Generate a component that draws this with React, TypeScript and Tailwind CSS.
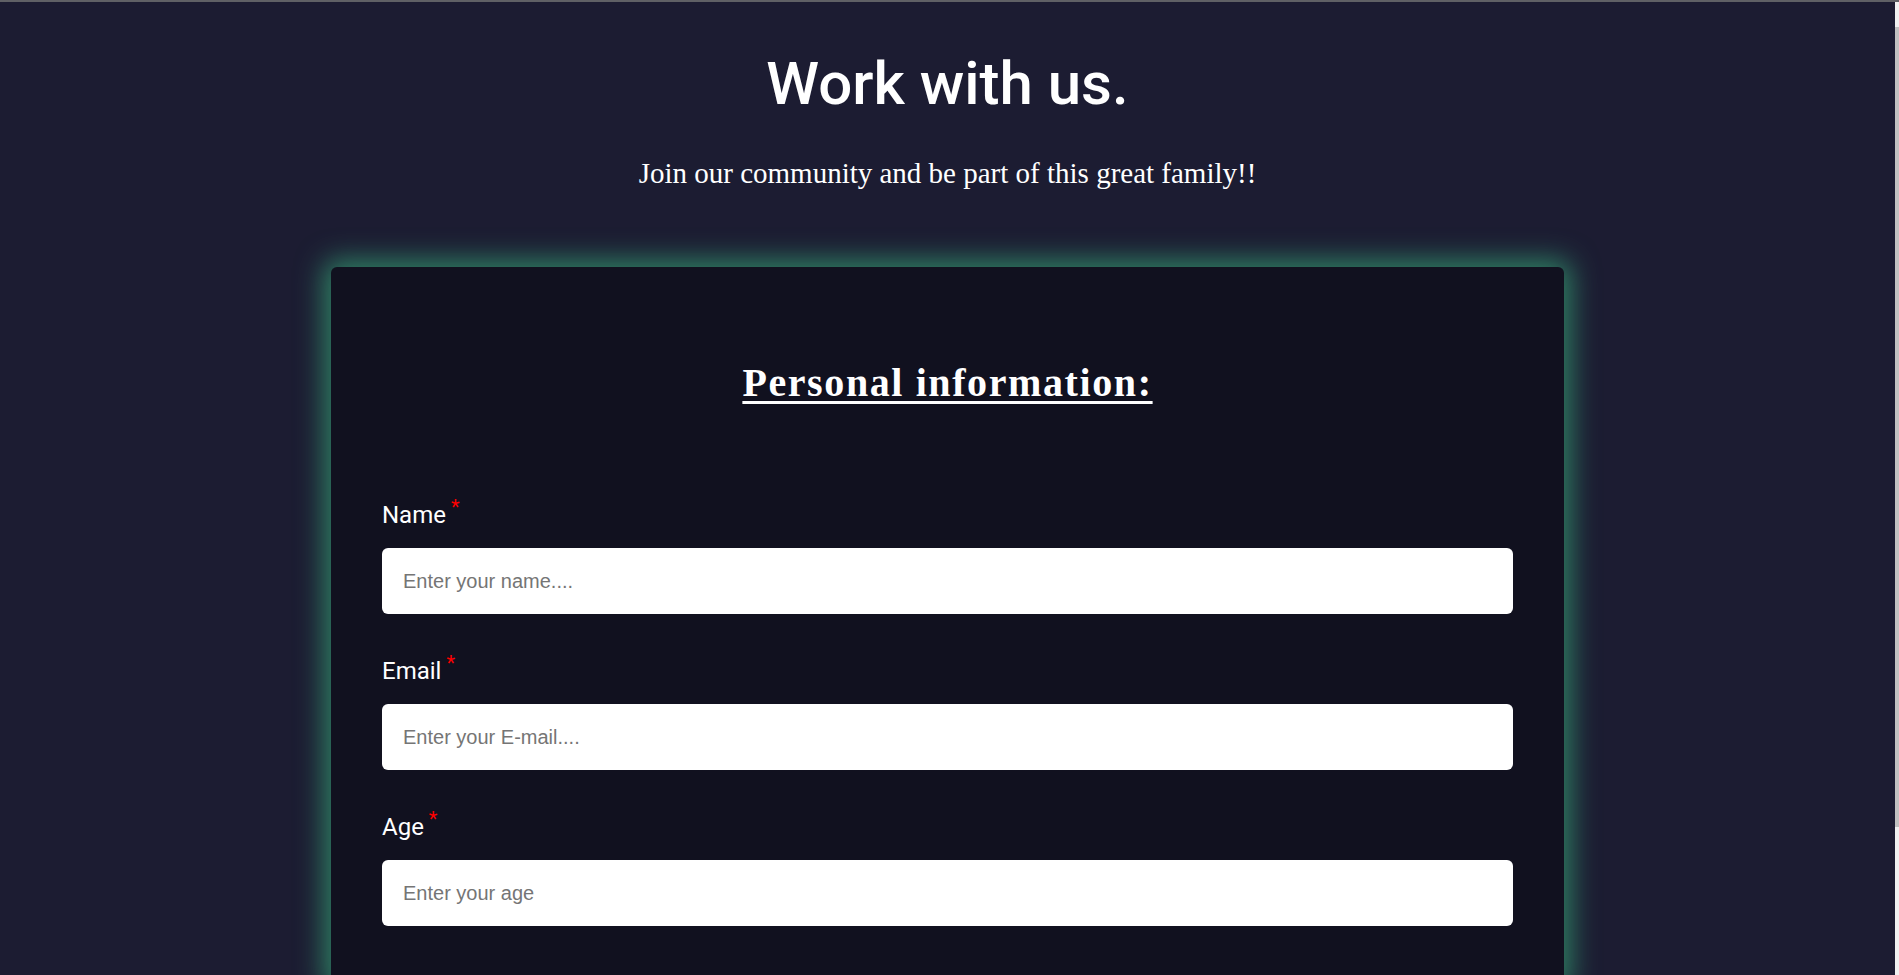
import React from "react";

const fields = [
  { label: "Name", placeholder: "Enter your name...." },
  { label: "Email", placeholder: "Enter your E-mail...." },
  { label: "Age", placeholder: "Enter your age" },
];

export default function App() {
  return (
    <div className="h-[975px] w-full overflow-hidden flex flex-col bg-[#1c1c32]">
      <div className="h-[2px] w-full bg-[#5f6065] shrink-0"></div>
      <div className="flex flex-1 min-h-0">
        <main className="flex-1 flex flex-col items-center overflow-hidden">
          <h1
            className="mt-[47px] text-white text-[60px] leading-[70px] font-medium"
            style={{ fontFamily: "Roboto, 'Liberation Sans', sans-serif" }}
          >
            Work with us.
          </h1>
          <p
            className="mt-[39px] text-white text-[29px] leading-[30px]"
            style={{ fontFamily: "Georgia, 'Liberation Serif', serif" }}
          >
            Join our community and be part of this great family!!
          </p>

          <section className="mt-[79px] w-[1233px] shrink-0 rounded-[6px] bg-[#11111f] px-[51px] pt-[95px] pb-[60px] shadow-[0_0_28px_7px_#2f8264]">
            <h2
              className="text-center text-white text-[40px] leading-[42px] font-bold tracking-[1.6px] underline underline-offset-[5px] decoration-[3px]"
              style={{ fontFamily: "Georgia, 'Liberation Serif', serif" }}
            >
              Personal information:
            </h2>

            <form className="mt-[97px] flex flex-col gap-[43px]">
              {fields.map((f) => (
                <div key={f.label} className="flex flex-col gap-[19px]">
                  <label
                    className="h-[28px] text-white text-[24px] leading-[28px]"
                    style={{ fontFamily: "Roboto, 'Liberation Sans', sans-serif" }}
                  >
                    {f.label}
                    <span className="relative -top-[9px] ml-[5px] text-[20px] leading-none text-[#ff0000]">*</span>
                  </label>
                  <input
                    type="text"
                    placeholder={f.placeholder}
                    className="h-[66px] w-full rounded-[6px] bg-white pl-[21px] text-[20px] text-black placeholder:text-[#757575] outline-none"
                    style={{ fontFamily: "'Liberation Sans', Arial, sans-serif" }}
                  />
                </div>
              ))}
            </form>
          </section>
        </main>
        <div className="w-[4px] shrink-0 bg-[#f1f1f1] flex flex-col">
          <div className="mt-[25px] h-[800px] bg-[#c1c1c1]"></div>
        </div>
      </div>
    </div>
  );
}
